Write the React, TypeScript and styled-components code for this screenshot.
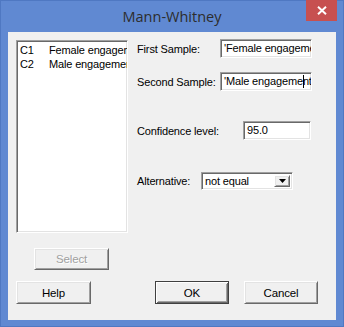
import React from "react";
import styled, { createGlobalStyle } from "styled-components";

const Global = createGlobalStyle`
  html, body { margin: 0; padding: 0; background: #fff; }
  body { font-family: "Liberation Sans", Arial, sans-serif; }
`;

const Window = styled.div`
  width: 344px;
  height: 327px;
  box-sizing: border-box;
  background: #6089d2;
  border: 1px solid #4f78c2;
  display: flex;
  flex-direction: column;
  padding: 0 7px 6px 7px;
`;

const TitleBar = styled.div`
  position: relative;
  height: 30px;
  display: flex;
  align-items: center;
  justify-content: center;
  font-family: "Open Sans", "Liberation Sans", sans-serif;
  font-size: 14.5px;
  color: #2d2d2d;
  padding-bottom: 1px;
`;

const CloseButton = styled.div`
  position: absolute;
  top: -1px;
  right: -1px;
  width: 31px;
  height: 21px;
  background: #c75050;
  display: flex;
  align-items: center;
  justify-content: center;
`;

const Client = styled.div`
  flex: 1;
  background: #f0f0f0;
  padding: 7px 8px 0 8px;
  display: flex;
  flex-direction: column;
  font-family: "Liberation Sans", Arial, sans-serif;
  font-size: 11px;
  letter-spacing: -0.15px;
  color: #000;
`;

const Top = styled.div`
  display: grid;
  grid-template-columns: 112px 1fr;
  column-gap: 9px;
`;

const sunken = `
  box-sizing: border-box;
  background: #fff;
  border: 1px solid;
  border-color: #a0a0a0 #fff #fff #a0a0a0;
  box-shadow: inset 1px 1px 0 #696969, inset -1px -1px 0 #e3e3e3;
`;

const ListBox = styled.div`
  ${sunken}
  margin-top: 1px;
  height: 193px;
  padding: 2px 0 0 3px;
  overflow: hidden;
`;

const ListItem = styled.div`
  display: flex;
  height: 14px;
  line-height: 14px;
  white-space: nowrap;
  overflow: hidden;
`;

const ColId = styled.span`
  width: 29px;
  flex: none;
`;

const ColName = styled.span`
  overflow: hidden;
  flex: 1;
  min-width: 0;
`;

const Form = styled.div`
  display: flex;
  flex-direction: column;
  padding-right: 16px;
`;

const FieldRow = styled.div<{ $gap: number }>`
  display: flex;
  align-items: center;
  margin-top: ${(p) => p.$gap}px;
`;

const Label = styled.label<{ $w: number }>`
  width: ${(p) => p.$w}px;
  flex: none;
  white-space: nowrap;
`;

const TextField = styled.div<{ $w: number; $h?: number }>`
  ${sunken}
  width: ${(p) => p.$w}px;
  height: ${(p) => p.$h ?? 19}px;
  padding: 0 0 0 3px;
  line-height: 17px;
  white-space: nowrap;
  overflow: hidden;
`;

const Caret = styled.span`
  display: inline-block;
  width: 1px;
  height: 13px;
  background: #000;
  vertical-align: -3px;
  margin-right: -1px;
`;

const Combo = styled.div`
  ${sunken}
  width: 92px;
  height: 18px;
  display: flex;
  align-items: stretch;
  padding: 2px 2px 2px 3px;
`;

const ComboText = styled.span`
  flex: 1;
  line-height: 13px;
  white-space: nowrap;
`;

const raised = `
  box-sizing: border-box;
  background: #f0f0f0;
  border: 1px solid;
  border-color: #fff #696969 #696969 #fff;
  box-shadow: inset 1px 1px 0 #e3e3e3, inset -1px -1px 0 #a0a0a0;
`;

const ComboArrow = styled.div`
  ${raised}
  width: 16px;
  display: flex;
  align-items: center;
  justify-content: center;
`;

const SelectRow = styled.div`
  margin-top: 15px;
  padding-left: 18px;
  display: flex;
`;

const ButtonRow = styled.div`
  margin-top: 11px;
  display: flex;
`;

const Button = styled.div<{ $w: number; $h?: number; $ml?: number; $default?: boolean; $disabled?: boolean }>`
  ${raised}
  width: ${(p) => p.$w}px;
  height: ${(p) => p.$h ?? 23}px;
  margin-left: ${(p) => p.$ml ?? 0}px;
  display: flex;
  align-items: center;
  justify-content: center;
  font-size: 11.5px;
  color: ${(p) => (p.$disabled ? "#a0a0a0" : "#000")};
  text-shadow: ${(p) => (p.$disabled ? "1px 1px 0 #fff" : "none")};
  ${(p) =>
    p.$default
      ? `border: 1px solid #404040;
         box-shadow: inset 1px 1px 0 #fff, inset -1px -1px 0 #696969, inset 2px 2px 0 #f0f0f0, inset -2px -2px 0 #a0a0a0;`
      : ""}
`;

export default function App() {
  return (
    <>
      <Global />
      <Window>
        <TitleBar>
          Mann-Whitney
          <CloseButton>
            <svg width="10" height="9" viewBox="0 0 10 9">
              <path d="M1 0.8 L9 8.2 M9 0.8 L1 8.2" stroke="#fff" strokeWidth="2" />
            </svg>
          </CloseButton>
        </TitleBar>
        <Client>
          <Top>
            <ListBox>
              <ListItem>
                <ColId>C1</ColId>
                <ColName>Female engagement</ColName>
              </ListItem>
              <ListItem>
                <ColId>C2</ColId>
                <ColName>Male engagement</ColName>
              </ListItem>
            </ListBox>
            <Form>
              <FieldRow $gap={0}>
                <Label $w={83}>First Sample:</Label>
                <TextField $w={92}>'Female engagement'</TextField>
              </FieldRow>
              <FieldRow $gap={14}>
                <Label $w={83}>Second Sample:</Label>
                <TextField $w={92}>
                  'Male engageme<Caret />nt'
                </TextField>
              </FieldRow>
              <FieldRow $gap={30}>
                <Label $w={106}>Confidence level:</Label>
                <TextField $w={68}>95.0</TextField>
              </FieldRow>
              <FieldRow $gap={32}>
                <Label $w={64}>Alternative:</Label>
                <Combo>
                  <ComboText>not equal</ComboText>
                  <ComboArrow>
                    <svg width="7" height="4" viewBox="0 0 7 4">
                      <path d="M0 0 H7 L3.5 4 Z" fill="#000" />
                    </svg>
                  </ComboArrow>
                </Combo>
              </FieldRow>
            </Form>
          </Top>
          <SelectRow>
            <Button $w={75} $h={22} $disabled>
              Select
            </Button>
          </SelectRow>
          <ButtonRow>
            <Button $w={75}>Help</Button>
            <Button $w={74} $ml={64} $default>
              OK
            </Button>
            <Button $w={74} $ml={15}>
              Cancel
            </Button>
          </ButtonRow>
        </Client>
      </Window>
    </>
  );
}
